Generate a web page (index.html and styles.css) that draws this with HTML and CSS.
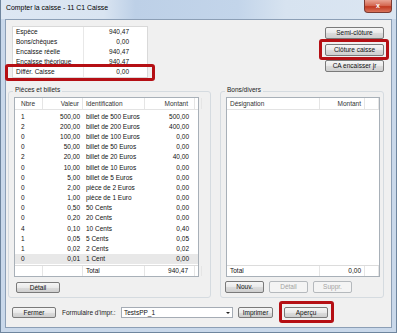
FILE: index.html
```html
<!DOCTYPE html>
<html>
<head>
<meta charset="utf-8">
<link rel="stylesheet" href="styles.css">
</head>
<body>
<div class="window">
  <div class="titlebar">
    <span class="title">Compter la caisse - 11 C1 Caisse</span>
    <span class="closebtn">x</span>
  </div>

  <div class="client">
    <div class="top">
      <div class="summary">
        <div class="srow"><span>Espèce</span><span class="num">940,47</span></div>
        <div class="srow"><span>Bons/chèques</span><span class="num">0,00</span></div>
        <div class="srow"><span>Encaisse réelle</span><span class="num">940,47</span></div>
        <div class="srow"><span>Encaisse théorique</span><span class="num">940,47</span></div>
        <div class="srow"><span>Différ. Caisse</span><span class="num">0,00</span></div>
      </div>
      <div class="sidebtns">
        <div class="btn wide">Semi-clôture</div>
        <div class="btn wide">Clôture caisse</div>
        <div class="btn wide">CA encaisser jr</div>
      </div>
    </div>

    <div class="groups">
      <div class="group pieces">
        <div class="legend">Pièces et billets</div>
        <div class="list plist">
          <div class="lhead prow">
            <span class="c">Nbre</span><span class="c r">Valeur</span><span class="c">Identification</span><span class="c r">Montant</span><span class="c"></span>
          </div>
          <div class="lbody">
            <div class="prow"><span>1</span><span class="r">500,00</span><span>billet de 500 Euros</span><span class="r">500,00</span></div>
            <div class="prow"><span>2</span><span class="r">200,00</span><span>billet de 200 Euros</span><span class="r">400,00</span></div>
            <div class="prow"><span>0</span><span class="r">100,00</span><span>billet de 100 Euros</span><span class="r">0,00</span></div>
            <div class="prow"><span>0</span><span class="r">50,00</span><span>billet de 50 Euros</span><span class="r">0,00</span></div>
            <div class="prow"><span>2</span><span class="r">20,00</span><span>billet de 20 Euros</span><span class="r">40,00</span></div>
            <div class="prow"><span>0</span><span class="r">10,00</span><span>billet de 10 Euros</span><span class="r">0,00</span></div>
            <div class="prow"><span>0</span><span class="r">5,00</span><span>billet de 5 Euros</span><span class="r">0,00</span></div>
            <div class="prow"><span>0</span><span class="r">2,00</span><span>pièce de 2 Euros</span><span class="r">0,00</span></div>
            <div class="prow"><span>0</span><span class="r">1,00</span><span>pièce de 1 Euro</span><span class="r">0,00</span></div>
            <div class="prow"><span>0</span><span class="r">0,50</span><span>50 Cents</span><span class="r">0,00</span></div>
            <div class="prow"><span>0</span><span class="r">0,20</span><span>20 Cents</span><span class="r">0,00</span></div>
            <div class="prow"><span>4</span><span class="r">0,10</span><span>10 Cents</span><span class="r">0,40</span></div>
            <div class="prow"><span>1</span><span class="r">0,05</span><span>5 Cents</span><span class="r">0,05</span></div>
            <div class="prow"><span>1</span><span class="r">0,02</span><span>2 Cents</span><span class="r">0,02</span></div>
            <div class="prow selected"><span>0</span><span class="r">0,01</span><span>1 Cent</span><span class="r">0,00</span></div>
          </div>
          <div class="ltotal prow">
            <span class="c"></span><span class="c"></span><span class="c">Total</span><span class="c r">940,47</span><span class="c"></span>
          </div>
        </div>
        <div class="btnrow">
          <div class="btn small">Détail</div>
        </div>
      </div>

      <div class="group bons">
        <div class="legend">Bons/divers</div>
        <div class="list blist">
          <div class="lhead brow">
            <span class="c">Désignation</span><span class="c r">Montant</span><span class="c"></span>
          </div>
          <div class="lbody"></div>
          <div class="ltotal brow">
            <span class="c">Total</span><span class="c r">0,00</span><span class="c"></span>
          </div>
        </div>
        <div class="btnrow">
          <div class="btn mini">Nouv.</div>
          <div class="btn mini disabled">Détail</div>
          <div class="btn mini disabled">Suppr.</div>
        </div>
      </div>
    </div>

    <div class="bottom">
      <div class="btn small">Fermer</div>
      <span class="formlabel">Formulaire d'impr.:</span>
      <div class="select"><span>TestsPP_1</span><span class="arrow"></span></div>
      <div class="btn print">Imprimer</div>
      <div class="btn small apercu">Aperçu</div>
    </div>
  </div>

  <!-- highlights drawn over the dialog -->
  <div class="mark mark-diff"></div>
  <div class="mark mark-cloture"></div>
  <div class="mark mark-apercu"></div>
</div>
</body>
</html>
```

FILE: styles.css
```css
body {
  margin: 0;
  font-family: "Liberation Sans", Arial, sans-serif;
  font-size: 6.5px;
  color: #111;
}

.window {
  position: relative;
  width: 397px;
  height: 333px;
  box-sizing: border-box;
  background: #c9d8ea;
  border: 1px solid #6e859e;
  border-top: none;
  display: flex;
  flex-direction: column;
}

/* title bar */
.titlebar {
  height: 19px;
  display: flex;
  justify-content: space-between;
  align-items: flex-start;
  background: linear-gradient(to right, #dde7f3 0, #d9e4f1 26%, #bdd0e7 34%, #c3d5ea 60%, #d7e3f0 72%, #dbe6f2 100%);
}
.title {
  font-size: 6.9px;
  line-height: 16px;
  margin-left: 5px;
  color: #000;
}
.closebtn {
  width: 28px;
  height: 13px;
  margin-right: 4px;
  box-sizing: border-box;
  border: 1px solid #7b3a32;
  border-top: none;
  border-radius: 0 0 4px 4px;
  background: linear-gradient(#e9a494, #d3634c 50%, #c1381f 55%, #d9745c);
  color: #fff;
  font-weight: bold;
  font-size: 7px;
  line-height: 11px;
  text-align: center;
}

/* client area */
.client {
  height: 309px;
  margin: 0 4px 0 4px;
  box-sizing: border-box;
  border: 1px solid #8c9fb6;
  background: #f0f0f0;
  display: flex;
  flex-direction: column;
}

.top {
  height: 65px;
  box-sizing: border-box;
  padding: 6px 7px 0 6px;
  display: flex;
  align-items: flex-start;
}

.summary {
  width: 136px;
  height: 52px;
  box-sizing: border-box;
  background: #fff;
  border: 1px solid #d9d9d9;
  background-image: linear-gradient(#e8e8e8, #e8e8e8);
  background-size: 1px 100%;
  background-position: 70px 0;
  background-repeat: no-repeat;
}
.srow {
  height: 10px;
  line-height: 10px;
  display: grid;
  grid-template-columns: 71px 1fr;
  padding-left: 3px;
}
.srow .num {
  text-align: right;
  padding-right: 18px;
}

.sidebtns {
  margin-left: auto;
  margin-top: 1px;
  display: flex;
  flex-direction: column;
  gap: 4.5px;
}

/* buttons */
.btn {
  height: 11px;
  box-sizing: border-box;
  border: 1px solid #7a7a7a;
  border-radius: 2px;
  background: linear-gradient(#f6f6f6, #e9e9e9 50%, #dcdcdc 51%, #cfcfcf);
  line-height: 9px;
  text-align: center;
  color: #111;
}
.btn.wide { width: 59px; height: 12px; line-height: 10px; }
.btn.small { width: 44px; }
.btn.mini { width: 39px; height: 12px; line-height: 10px; }
.btn.print { width: 35px; }
.btn.disabled {
  border-color: #b5b9bd;
  background: #f4f4f4;
  color: #a3a3a3;
}

/* group boxes */
.groups {
  display: flex;
  gap: 9px;
  margin-top: 6px;
  padding-left: 2px;
}
.group {
  height: 207px;
  box-sizing: border-box;
  border: 1px solid #d5dbe0;
  border-radius: 3px;
}
.pieces { width: 203px; }
.bons { width: 164px; }
.legend {
  margin: -7px 0 0 4px;
  padding: 0 2px;
  width: max-content;
  line-height: 9px;
  background: #f0f0f0;
  color: #222;
}

.list {
  margin-top: 3px;
  height: 180px;
  box-sizing: border-box;
  border: 1px solid #a8b0b8;
  background: #fff;
  display: flex;
  flex-direction: column;
}
.plist { width: 185px; margin-left: 5px; }
.blist { width: 154px; margin-left: 5px; }

.prow {
  display: grid;
  grid-template-columns: 28px 40px 62px 50px 1fr;
  height: 10.2px;
  line-height: 10.2px;
  white-space: nowrap;
}
.brow {
  display: grid;
  grid-template-columns: 93px 45px 1fr;
}
.prow span, .brow span { padding: 0 3px; overflow: hidden; }
.prow span:first-child { padding-left: 6px; }
.prow span:nth-child(4) { padding-right: 6px; }
.brow span:first-child { padding-left: 3px; }
.r { text-align: right; }

.lhead {
  height: 12px;
  line-height: 11px;
  box-sizing: border-box;
  border-bottom: 1px solid #e3e3e3;
  color: #333;
}
.lhead .c, .ltotal .c { border-right: 1px solid #e5e5e5; }
.lbody {
  flex: 1;
  padding-top: 1.6px;
}
.selected { background: #e8e8e8; }
.ltotal {
  height: 11px;
  line-height: 10px;
  box-sizing: border-box;
  border-top: 1px solid #dcdcdc;
}

.btnrow {
  display: flex;
  gap: 5px;
  margin-top: 4px;
}
.pieces .btnrow { padding-left: 7px; margin-top: 5px; }
.bons .btnrow { padding-left: 4px; }

/* bottom bar */
.bottom {
  display: flex;
  align-items: center;
  margin-top: 9px;
  padding-left: 6px;
  height: 11px;
}
.formlabel {
  width: 59px;
  margin-left: 6px;
  color: #222;
}
.select {
  width: 112px;
  height: 11px;
  box-sizing: border-box;
  border: 1px solid #a5acb5;
  background: #fff;
  display: flex;
  justify-content: space-between;
  align-items: center;
  padding: 0 2px;
  margin-right: 5px;
}
.arrow {
  width: 0;
  height: 0;
  border-left: 2px solid transparent;
  border-right: 2px solid transparent;
  border-top: 2px solid #222;
}
.apercu { margin-left: 11px; }

/* red highlight frames */
.mark {
  position: absolute;
  box-sizing: border-box;
  border: 3px solid #b50f14;
  border-radius: 3px;
}
.mark-diff { left: 4px; top: 64px; width: 150px; height: 17px; }
.mark-cloture { left: 318px; top: 39px; width: 70px; height: 21px; }
.mark-apercu { left: 278px; top: 301px; width: 55px; height: 22px; }
```
